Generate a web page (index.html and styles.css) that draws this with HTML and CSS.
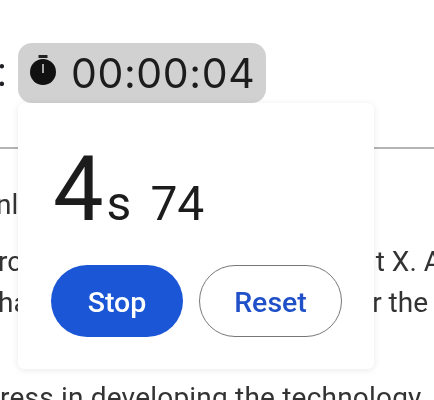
FILE: index.html
```html
<!DOCTYPE html>
<html lang="en">
<head>
<meta charset="utf-8">
<title>Stopwatch</title>
<link rel="stylesheet" href="styles.css">
</head>
<body>
<div class="page">
  <header class="top">
    <span class="colon">:</span>
    <div class="chip">
      <svg class="watch" viewBox="0 0 28 32" width="28" height="32" aria-hidden="true">
        <rect x="9.5" y="0" width="9" height="3" fill="#222"/>
        <circle cx="14" cy="17" r="13" fill="#111"/>
        <rect x="13.2" y="9" width="1.6" height="9" fill="#ccc"/>
      </svg>
      <span class="time">00:00:04</span>
    </div>
  </header>
  <main class="article">
    <p class="line first"><span>nl</span></p>
    <p class="line second"><span>rc</span><span class="tail-a">t X. A</span></p>
    <p class="line third"><span>ha</span><span class="tail-b">r the</span></p>
    <p class="line fourth">ress in developing the technology</p>
  </main>
</div>
<section class="popover">
  <div class="reading"><span class="sec">4</span><span class="unit">s</span><span class="cs">74</span></div>
  <div class="actions">
    <button class="btn stop">Stop</button>
    <button class="btn reset">Reset</button>
  </div>
</section>
</body>
</html>
```
FILE: styles.css
```css
html, body {
  margin: 0;
  padding: 0;
  height: 400px;
  overflow: hidden;
  background: #fff;
}
body {
  font-family: Roboto, "Noto Sans", sans-serif;
  color: #202124;
  position: relative;
}
.page {
  width: 434px;
  overflow: hidden;
  filter: blur(0.6px);
}
.top {
  height: 147px;
  border-bottom: 2px solid #b4b4b4;
  display: flex;
  align-items: flex-start;
}
.colon {
  font-size: 40px;
  line-height: 60px;
  margin-top: 43px;
  width: 18px;
  margin-left: -3px;
  margin-right: 3px;
}
.chip {
  margin-top: 43px;
  width: 248px;
  height: 60px;
  box-sizing: border-box;
  background: #d1d1d1;
  border-radius: 14px;
  display: flex;
  align-items: center;
  padding-left: 11px;
  gap: 14px;
}
.watch { flex: none; margin-top: -4px; }
.time {
  font-family: Inter, Roboto, sans-serif;
  font-size: 41px;
  color: #1c1c1c;
  letter-spacing: 0.6px;
}
.article {
  font-size: 28px;
  line-height: 41px;
  color: #333;
  white-space: nowrap;
}
.line {
  margin: 0;
  display: flex;
  justify-content: space-between;
  width: 434px;
}
.first { padding-top: 35px; margin-left: -4px; }
.second { padding-top: 16px; margin-left: -2px; }
.third { margin-left: -2px; }
.fourth { padding-top: 54px; letter-spacing: 0.2px; }
.tail-a { margin-right: -10px; }
.tail-b { margin-right: 4px; }
.popover {
  position: absolute;
  left: 18px;
  top: 103px;
  width: 356px;
  height: 266px;
  box-sizing: border-box;
  background: #fff;
  border-radius: 6px;
  box-shadow: 0 1px 7px rgba(0,0,0,0.09);
  padding: 37px 0 0 33px;
}
.reading {
  display: flex;
  align-items: baseline;
  line-height: 100px;
  height: 100px;
  color: #1c1c1c;
  filter: blur(0.4px);
}
.sec { font-size: 90px; margin-left: 2px; }
.unit { font-size: 48px; margin-left: 3px; }
.cs { font-size: 48px; margin-left: 19px; }
.actions {
  display: flex;
  gap: 16px;
  margin-top: 25px;
  filter: blur(0.4px);
}
.btn {
  font-family: Roboto, sans-serif;
  font-size: 28.5px;
  font-weight: 500;
  height: 72px;
  border-radius: 36px;
  box-sizing: border-box;
  padding: 3px 0 0;
}
.stop {
  width: 132px;
  background: #1a56d6;
  color: #fff;
  border: none;
}
.reset {
  width: 143px;
  background: #fff;
  color: #1f50c8;
  border: 1px solid #777;
}
```
